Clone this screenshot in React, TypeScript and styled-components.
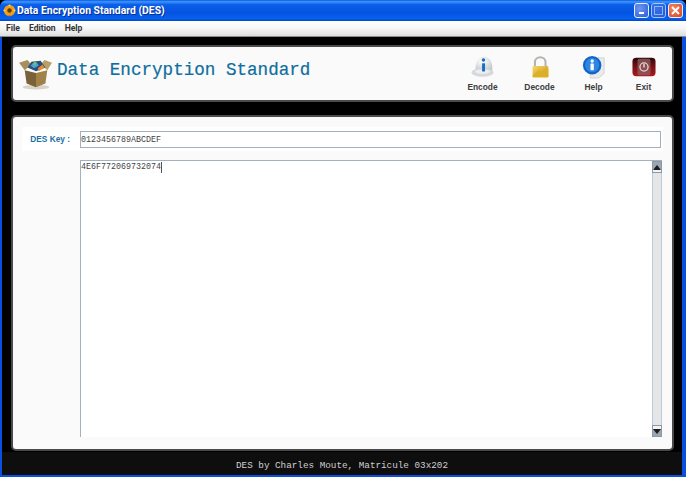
import React, { FunctionComponent } from 'react';
import styled, { createGlobalStyle } from 'styled-components';

const GlobalStyle = createGlobalStyle`
    html, body {
        margin: 0;
        padding: 0;
        background: #000;
        overflow: hidden;
    }
`;

const Frame = styled.div`
    width: 686px;
    height: 477px;
    display: flex;
    flex-direction: column;
    box-sizing: border-box;
    background: #0a4fe0;
    border-radius: 7px 7px 0 0;
    overflow: hidden;
`;

const TitleBar = styled.div`
    height: 21px;
    flex: none;
    display: flex;
    align-items: center;
    padding: 0 3px 0 3px;
    gap: 1px;
    background: linear-gradient(180deg, #0a58e0 0%, #3d95ff 8%, #0a5fe8 22%, #0553e1 60%, #0661ee 88%, #0348c4 100%);
`;

const TitleText = styled.span`
    flex: 1;
    font: bold 10.4px Roboto, "Liberation Sans", Arial, sans-serif;
    color: #fff;
    text-shadow: 1px 1px 0 #0a2f90;
    white-space: nowrap;
`;

const WindowButton = styled.div<{ $kind: 'min' | 'max' | 'close' }>`
    width: 15px;
    height: 15px;
    box-sizing: border-box;
    border: 1px solid #e8eefc;
    border-radius: 3px;
    margin-left: 1px;
    background: ${props => props.$kind === 'close'
        ? 'radial-gradient(circle at 35% 35%, #f08a68, #d8431c)'
        : props.$kind === 'min'
            ? 'radial-gradient(circle at 35% 35%, #6f97f0, #2a5bd8)'
            : 'radial-gradient(circle at 35% 35%, #4f7fe8, #2a5bd8)'};
    opacity: ${props => props.$kind === 'max' ? 0.7 : 1};
    display: flex;
    align-items: center;
    justify-content: center;
`;

const MenuBar = styled.div`
    height: 16px;
    flex: none;
    box-sizing: border-box;
    display: flex;
    align-items: center;
    gap: 9px;
    padding: 0 0 1px 6px;
    background: linear-gradient(180deg, #ffffff 0%, #f6f6f6 50%, #dcdcdc 100%);
    border-bottom: 1px solid #8a8a8a;
`;

const MenuItem = styled.span`
    font: bold 8.6px Roboto, "Liberation Sans", Arial, sans-serif;
    color: #333;
`;

const Client = styled.div`
    flex: 1;
    min-height: 0;
    display: flex;
    flex-direction: column;
    margin: 0 4px 2px 2px;
`;

const Main = styled.div`
    flex: none;
    display: flex;
    flex-direction: column;
    padding: 8px 8px 1px 9px;
    gap: 13px;
    background: #000;
`;

const Panel = styled.div`
    box-sizing: border-box;
    background: #fafafa;
    border: 2px solid #4a4a4a;
    border-radius: 5px;
`;

const Header = styled(Panel)`
    height: 57px;
    flex: none;
    display: flex;
    align-items: center;
    padding: 0 4px 0 6px;
`;

const Logo = styled.svg`
    width: 34px;
    height: 32px;
    flex: none;
    margin-right: 4px;
`;

const Heading = styled.h1`
    flex: 1;
    margin: 0 0 8px;
    font: normal 17.6px "Liberation Mono", "Courier New", monospace;
    -webkit-text-stroke: 0.2px #0f6e9e;
    color: #0f6e9e;
    white-space: nowrap;
`;

const Tools = styled.div`
    display: flex;
`;

const Tool = styled.div<{ $width: number }>`
    width: ${props => props.$width}px;
    display: flex;
    flex-direction: column;
    align-items: center;
    gap: 3px;
`;

const ToolIcon = styled.svg`
    width: 24px;
    height: 24px;
`;

const ToolLabel = styled.span`
    font: bold 8.4px "Liberation Sans", Arial, sans-serif;
    color: #3c3c3c;
`;

const Content = styled(Panel)`
    height: 336px;
    flex: none;
    display: flex;
    flex-direction: column;
    padding: 10px 9px 12px 9px;
    gap: 9px;
`;

const KeyRow = styled.div`
    display: flex;
    align-items: center;
    height: 24px;
    flex: none;
    background: #ffffff;
`;

const KeyLabel = styled.label`
    width: 58px;
    flex: none;
    box-sizing: border-box;
    padding-right: 10px;
    text-align: right;
    font: bold 8.3px "Liberation Sans", Arial, sans-serif;
    color: #1d6f9f;
`;

const KeyInput = styled.div`
    flex: 1;
    height: 17px;
    box-sizing: border-box;
    margin-right: 2px;
    background: #fff;
    border: 1px solid #a3b0bd;
    font: 8.33px/17px "Liberation Mono", "Courier New", monospace;
    color: #444;
`;

const EditorRow = styled.div`
    flex: 1;
    min-height: 0;
    display: flex;
    margin: 0 1px 0 58px;
`;

const Editor = styled.div`
    flex: 1;
    display: flex;
    background: #fff;
    border-left: 1px solid #a3b0bd;
    border-top: 1px solid #a3b0bd;
`;

const EditorText = styled.div`
    flex: 1;
    padding: 1px 0 0 0;
    font: 8.33px/11px "Liberation Mono", "Courier New", monospace;
    color: #444;
`;

const Caret = styled.span`
    display: inline-block;
    width: 1px;
    height: 11px;
    vertical-align: top;
    background: #555;
`;

const ScrollBar = styled.div`
    width: 10px;
    flex: none;
    box-sizing: border-box;
    display: flex;
    flex-direction: column;
    background: #e6e6e6;
    border-left: 1px solid #b9cde2;
    border-right: 1px solid #b9cde2;
`;

const ScrollButton = styled.div<{ $down?: boolean }>`
    height: 12px;
    flex: none;
    box-sizing: border-box;
    background: ${props => props.$down
        ? 'linear-gradient(180deg, #f4f4f4 0 30%, #9aa6b2 30% 100%)'
        : 'linear-gradient(180deg, #9aa6b2 0 70%, #f4f4f4 70% 100%)'};
    border: 1px solid #8c98a6;
    margin: 0 -1px;
    display: flex;
    align-items: center;
    justify-content: center;
    &::after {
        content: '';
        width: 0;
        height: 0;
        border-left: 4px solid transparent;
        border-right: 4px solid transparent;
        border-${props => props.$down ? 'top' : 'bottom'}: 5px solid #1c1c1c;
    }
`;

const ScrollTrack = styled.div`
    flex: 1;
`;

const Footer = styled.div`
    flex: 1;
    min-height: 0;
    padding-top: 3px;
    display: flex;
    align-items: center;
    justify-content: center;
    background: #0e0e0e;
    font: 9.3px "Liberation Mono", "Courier New", monospace;
    color: #cfcfcf;
`;

const SunIcon: FunctionComponent = () => (
    <svg width="13" height="13" viewBox="0 0 13 13">
        <circle cx="6.5" cy="6.5" r="5.6" fill="#f0a018" />
        <circle cx="6.5" cy="6.5" r="2.2" fill="#6a3a10" />
        <circle cx="6.5" cy="1.5" r="1.1" fill="#ffd24a" />
        <circle cx="11.5" cy="6.5" r="1.1" fill="#ffd24a" />
        <circle cx="6.5" cy="11.5" r="1.1" fill="#e07a10" />
        <circle cx="1.5" cy="6.5" r="1.1" fill="#ffd24a" />
    </svg>
);

const BoxLogo: FunctionComponent = () => (
    <Logo viewBox="0 0 36 34">
        <ellipse cx="18" cy="31" rx="14" ry="2.5" fill="#d8d4cc" />
        <path d="M6 13 L18 16 L18 31 L8 27 Z" fill="#7a6238" />
        <path d="M30 13 L18 16 L18 31 L28 27 Z" fill="#a08248" />
        <path d="M6 13 L0 5 L9 2 L13 7 Z" fill="#a8905c" />
        <path d="M30 13 L35 5 L27 2 L23 7 Z" fill="#b89f68" />
        <path d="M9 10 L13 4 L23 3 L28 10 L18 14 Z" fill="#2b4f7a" />
        <path d="M12 8 L18 4 L21 8 L16 11 Z" fill="#4aa0d8" />
        <path d="M20 11 L25 7 L27 10 L21 14 Z" fill="#e88a2c" />
        <path d="M14 6 L17 4 L19 6 L16 8 Z" fill="#6fc46a" />
    </Logo>
);

const EncodeIcon: FunctionComponent = () => (
    <ToolIcon viewBox="0 0 26 26">
        <defs>
            <radialGradient id="dome" cx="40%" cy="30%" r="75%">
                <stop offset="0%" stopColor="#ffffff" />
                <stop offset="100%" stopColor="#c4c8cc" />
            </radialGradient>
        </defs>
        <path d="M5 17 C4 7 9 2 14 2 C20 2 24 8 23 17 Z" fill="url(#dome)" />
        <ellipse cx="12.5" cy="19" rx="12" ry="4.6" fill="#d6d8da" />
        <ellipse cx="12.5" cy="18" rx="8" ry="2.4" fill="#eceeef" />
        <circle cx="13.5" cy="5.5" r="1.9" fill="#1a6fc0" />
        <rect x="12" y="9" width="3.2" height="9" rx="0.6" fill="#1a6fc0" />
    </ToolIcon>
);

const DecodeIcon: FunctionComponent = () => (
    <ToolIcon viewBox="0 0 26 26">
        <defs>
            <linearGradient id="gold" x1="0" y1="0" x2="1" y2="1">
                <stop offset="0%" stopColor="#f4d868" />
                <stop offset="100%" stopColor="#c8920c" />
            </linearGradient>
        </defs>
        <path d="M7.5 13 V8 C7.5 0.5 19 0.5 19 8 V13" fill="none" stroke="#b4b4ac" strokeWidth="2.2" />
        <rect x="5" y="12" width="17" height="12" rx="1" fill="url(#gold)" />
        <path d="M5 22 L12 16 L14 20 L22 15 V24 H5 Z" fill="#dcb024" />
    </ToolIcon>
);

const HelpIcon: FunctionComponent = () => (
    <ToolIcon viewBox="0 0 26 26">
        <path d="M9 3 H24 V20 L18 25 H9 Z" fill="#e8ebee" stroke="#c2c6ca" strokeWidth="0.7" />
        <circle cx="11" cy="11" r="10" fill="#1466c8" />
        <circle cx="11" cy="11" r="8.2" fill="#2c86e4" stroke="#0c4ea4" strokeWidth="0.6" />
        <circle cx="11" cy="6.5" r="1.8" fill="#fff" />
        <rect x="9.2" y="9.2" width="3.6" height="7.4" rx="0.5" fill="#fff" />
    </ToolIcon>
);

const ExitIcon: FunctionComponent = () => (
    <ToolIcon viewBox="0 0 26 26">
        <defs>
            <linearGradient id="exitRed" x1="0" y1="0" x2="0" y2="1">
                <stop offset="0%" stopColor="#2a0808" />
                <stop offset="50%" stopColor="#7a1216" />
                <stop offset="100%" stopColor="#b0181c" />
            </linearGradient>
        </defs>
        <rect x="0.5" y="3" width="25" height="20" rx="4" fill="url(#exitRed)" />
        <rect x="6" y="4" width="14" height="18" rx="2" fill="#8e5c5e" opacity="0.8" />
        <circle cx="13" cy="13" r="4.4" fill="none" stroke="#e4d4d4" strokeWidth="1.4" />
        <rect x="12.2" y="9.6" width="1.6" height="4" fill="#e4d4d4" />
    </ToolIcon>
);

const App: FunctionComponent = () => (
    <>
        <GlobalStyle />
        <Frame>
            <TitleBar>
                <SunIcon />
                <TitleText>Data Encryption Standard (DES)</TitleText>
                <WindowButton $kind="min">
                    <svg width="8" height="8" viewBox="0 0 8 8"><rect x="1" y="5" width="5" height="2" fill="#fff" /></svg>
                </WindowButton>
                <WindowButton $kind="max">
                    <svg width="9" height="9" viewBox="0 0 9 9"><rect x="0.5" y="0.5" width="8" height="8" fill="none" stroke="#cfdcf8" /></svg>
                </WindowButton>
                <WindowButton $kind="close">
                    <svg width="11" height="11" viewBox="0 0 11 11"><path d="M2 2 L9 9 M9 2 L2 9" stroke="#fff" strokeWidth="1.8" /></svg>
                </WindowButton>
            </TitleBar>
            <MenuBar>
                <MenuItem>File</MenuItem>
                <MenuItem>Edition</MenuItem>
                <MenuItem>Help</MenuItem>
            </MenuBar>
            <Client>
                <Main>
                    <Header>
                        <BoxLogo />
                        <Heading>Data Encryption Standard</Heading>
                        <Tools>
                            <Tool $width={57}><EncodeIcon /><ToolLabel>Encode</ToolLabel></Tool>
                            <Tool $width={57}><DecodeIcon /><ToolLabel>Decode</ToolLabel></Tool>
                            <Tool $width={51}><HelpIcon /><ToolLabel>Help</ToolLabel></Tool>
                            <Tool $width={49}><ExitIcon /><ToolLabel>Exit</ToolLabel></Tool>
                        </Tools>
                    </Header>
                    <Content>
                        <KeyRow>
                            <KeyLabel>DES Key :</KeyLabel>
                            <KeyInput>0123456789ABCDEF</KeyInput>
                        </KeyRow>
                        <EditorRow>
                            <Editor>
                                <EditorText>4E6F772069732074<Caret /></EditorText>
                                <ScrollBar>
                                    <ScrollButton />
                                    <ScrollTrack />
                                    <ScrollButton $down />
                                </ScrollBar>
                            </Editor>
                        </EditorRow>
                    </Content>
                </Main>
                <Footer>DES by Charles Moute, Matricule 03x202</Footer>
            </Client>
        </Frame>
    </>
);

export default App;
